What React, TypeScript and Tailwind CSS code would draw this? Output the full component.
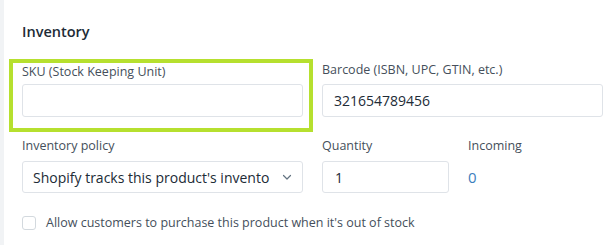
import React from "react";

export default function App() {
  const font = { fontFamily: '"Open Sans", "Noto Sans", sans-serif' };
  return (
    <div
      className="w-[615px] h-[245px] bg-white border-l-4 border-[#f1f3f5] pl-[18px] pt-[22px] text-[#212b36] overflow-hidden"
      style={font}
    >
      <h2 className="text-[14.5px] leading-[20px] font-semibold text-[#212b36]">Inventory</h2>

      <div className="mt-[21px] grid grid-cols-[281px_281px] gap-x-[19px]">
        <div className="-ml-[13px] -mr-[10px] -mt-[4px] border-4 border-[#b6e02f] pl-[9px] pr-[6px] pb-[11px]">
          <label className="block text-[12.5px] leading-[18px] text-[#454f5b]">SKU (Stock Keeping Unit)</label>
          <div className="mt-[3px] h-[33px] rounded-[3px] border border-[#dfe3e8] bg-white" />
        </div>
        <div>
          <label className="block text-[12.5px] leading-[18px] text-[#454f5b] -mt-[2px]">Barcode (ISBN, UPC, GTIN, etc.)</label>
          <div className="mt-[5px] h-[33px] rounded-[3px] border border-[#dfe3e8] bg-white flex items-center pl-[11px] text-[14px] text-[#212b36]">
            321654789456
          </div>
        </div>
      </div>

      <div className="mt-[5px] grid grid-cols-[281px_127px_1fr] gap-x-[19px]">
        <div>
          <label className="block text-[12.5px] leading-[18px] text-[#454f5b]">Inventory policy</label>
          <div className="mt-[6px] h-[32px] rounded-[3px] border border-[#dfe3e8] bg-white flex items-center pl-[10px] pr-[9px] text-[14px] text-[#212b36]">
            <span className="flex-1 whitespace-nowrap overflow-hidden">Shopify tracks this product's invento</span>
            <svg width="12" height="12" viewBox="0 0 12 12" className="ml-[4px] shrink-0">
              <path d="M2.5 4.5 L6 8 L9.5 4.5" fill="none" stroke="#637381" strokeWidth="1.2" strokeLinecap="round" strokeLinejoin="round" />
            </svg>
          </div>
        </div>
        <div>
          <label className="block text-[12.5px] leading-[18px] text-[#454f5b]">Quantity</label>
          <div className="mt-[6px] h-[32px] rounded-[3px] border border-[#dfe3e8] bg-white flex items-center pl-[12px] text-[14px] text-[#212b36]">
            1
          </div>
        </div>
        <div>
          <label className="block text-[12.5px] leading-[18px] text-[#454f5b]">Incoming</label>
          <div className="mt-[6px] h-[32px] flex items-center text-[15px] text-[#3c80bd]">0</div>
        </div>
      </div>

      <div className="mt-[21px] flex items-center">
        <div className="w-[14px] h-[14px] rounded-[3px] border border-[#d3d9de] bg-white shrink-0" />
        <span className="ml-[10px] text-[12.5px] leading-[18px] text-[#454f5b]">
          Allow customers to purchase this product when it's out of stock
        </span>
      </div>
    </div>
  );
}
